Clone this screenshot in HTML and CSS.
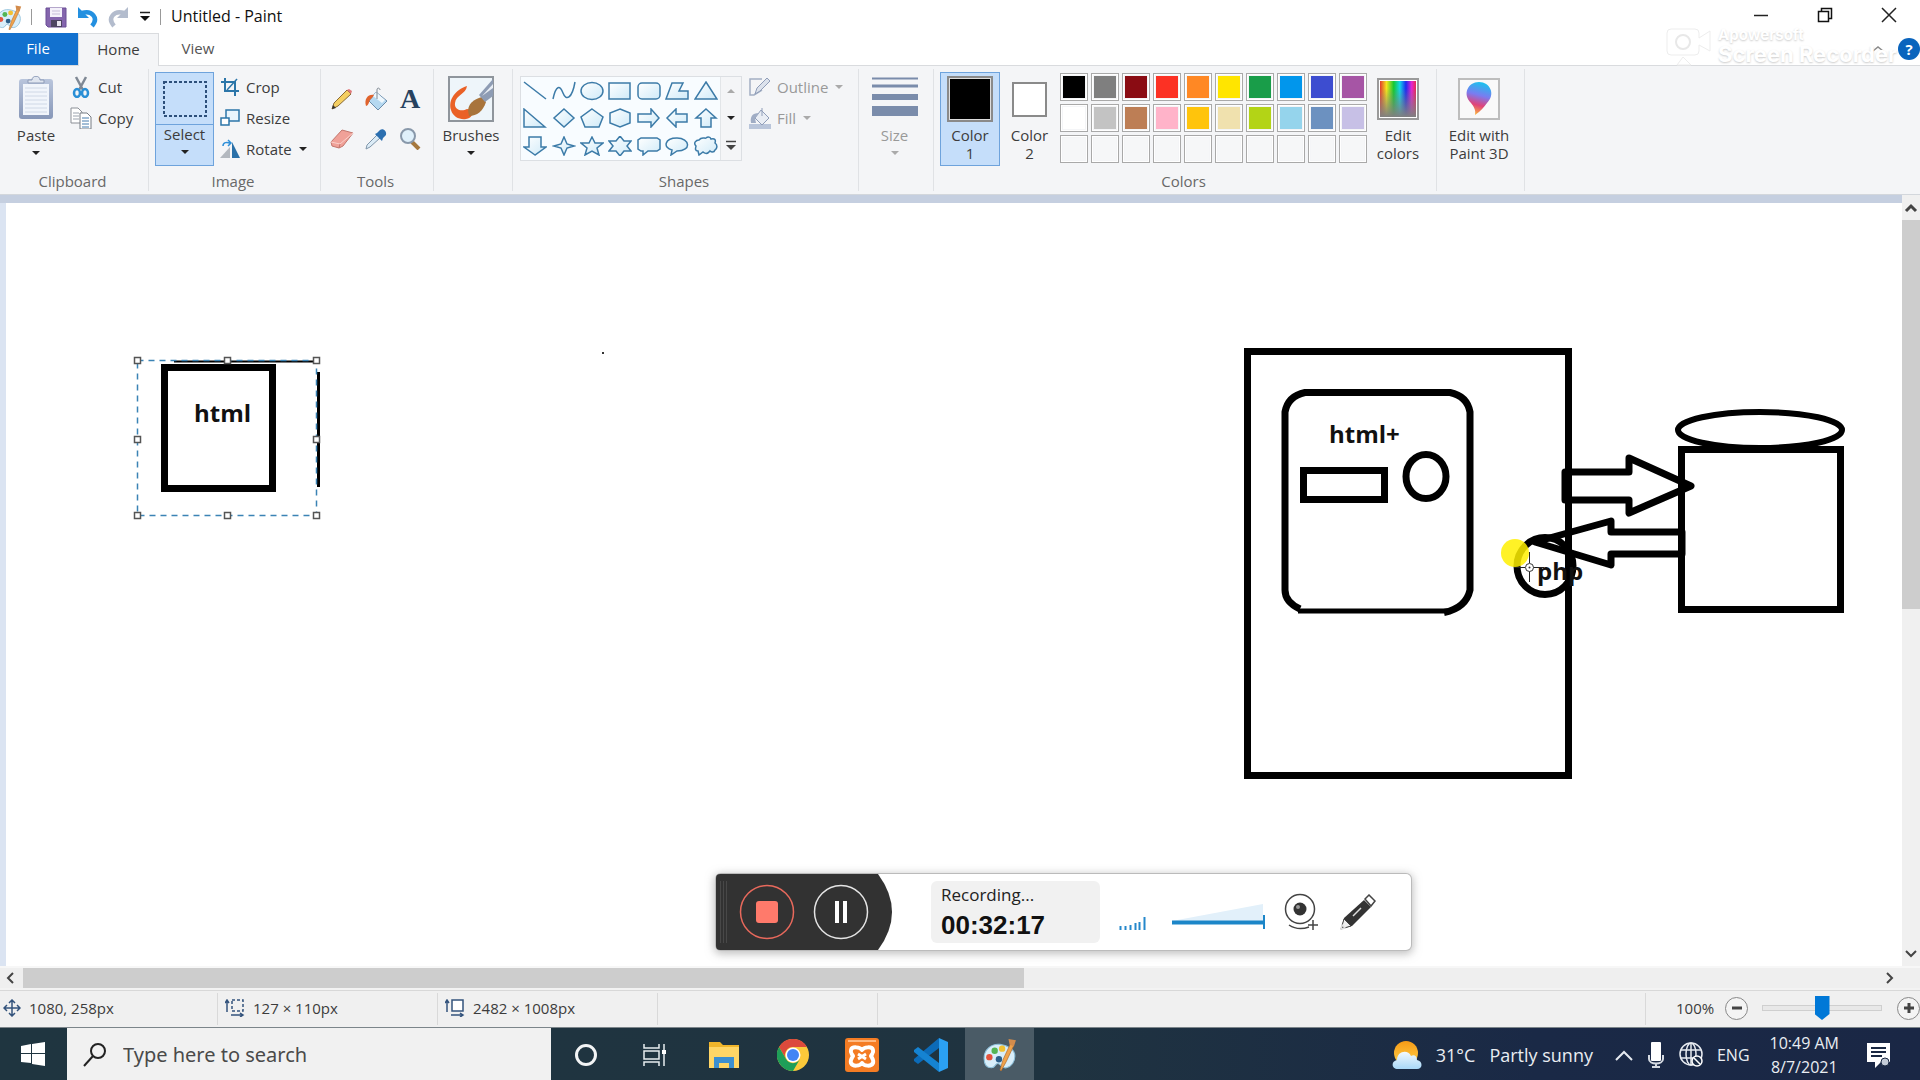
FILE: index.html
```html
<!DOCTYPE html>
<html lang="en">
<head>
<meta charset="utf-8">
<title>Untitled - Paint</title>
<link rel="stylesheet" href="styles.css">
</head>
<body>
<svg class="defs" aria-hidden="true">
  <defs>
    <linearGradient id="blueFill" x1="0" y1="0" x2="1" y2="1"><stop offset="0" stop-color="#fff"/><stop offset="1" stop-color="#cfeaf8"/></linearGradient>
    <linearGradient id="board" x1="0" y1="0" x2="0" y2="1"><stop offset="0" stop-color="#b9c5dc"/><stop offset="1" stop-color="#8797b8"/></linearGradient>
    <linearGradient id="rainbow"><stop offset="0" stop-color="#e33a2e"/><stop offset=".18" stop-color="#f4e51c"/><stop offset=".38" stop-color="#14c832"/><stop offset=".55" stop-color="#12d5e8"/><stop offset=".72" stop-color="#1c2af0"/><stop offset=".88" stop-color="#e424d0"/><stop offset="1" stop-color="#e52a50"/></linearGradient>
    <linearGradient id="fade" x1="0" y1="0" x2="0" y2="1"><stop offset=".2" stop-color="#808080" stop-opacity="0"/><stop offset="1" stop-color="#808080"/></linearGradient>
    <linearGradient id="pin" x1=".6" y1="0" x2=".4" y2="1"><stop offset="0" stop-color="#18c4ee"/><stop offset=".4" stop-color="#7a7cf0"/><stop offset=".7" stop-color="#e0427a"/><stop offset="1" stop-color="#fbb63a"/></linearGradient>
    <linearGradient id="sun" x1="0" y1="0" x2="0" y2="1"><stop offset="0" stop-color="#f59a16"/><stop offset="1" stop-color="#ffd24a"/></linearGradient>
    <linearGradient id="cloud" x1="0" y1="0" x2="0" y2="1"><stop offset="0" stop-color="#f2f9ff"/><stop offset="1" stop-color="#a8d8f8"/></linearGradient>
    <symbol id="palette" viewBox="0 0 32 32">
      <path d="M16 6C8 5 1 11 1 19c0 6 3 9 7 9 4 0 3-4 6-4 3 0 3 5 8 4 5-1 8-6 8-11C30 11 24 7 16 6z" fill="#d8eefa" stroke="#8dbfd9" stroke-width="1"/>
      <circle cx="6" cy="18" r="3" fill="#e5533d"/><circle cx="11" cy="12" r="3" fill="#54b454"/><circle cx="18" cy="10" r="3" fill="#f1c233"/><circle cx="15" cy="20" r="3" fill="#2c5f8a"/>
      <path d="M16 30l3-10 7-15 3 2-7 15-5 9z" fill="#f0a34c" stroke="#a9672b" stroke-width=".6"/><path d="M24 1l7 1-2 6-4-2z" fill="#d38c4c"/>
    </symbol>
  </defs>
</svg>

<div class="app">
  <header class="titlebar">
    <svg class="app-icon" viewBox="5 0 27 30"><use href="#palette" width="32" height="32"/></svg>
    <span class="divider"></span>
    <button class="plain save" aria-label="Save"><svg width="22" height="22" viewBox="0 0 22 22"><path d="M1 2h20v19H3l-2-2z" fill="#8465ad" stroke="#6b4e96"/><path d="M5 2h12v9H5z" fill="#f4f1fa"/><path d="M7 5h8M7 8h8" stroke="#c7bdd9"/><path d="M6 14h11v7H6z" fill="#4d4461"/><path d="M12 15h4v5h-4z" fill="#e8e4f0"/></svg></button>
    <button class="plain undo" aria-label="Undo"><svg width="22" height="22" viewBox="0 0 22 22"><path d="M5 7c10-3 17 5 10 13" fill="none" stroke="#2490e0" stroke-width="4.500"/><path d="M1 1v11l11 0z" fill="#2490e0"/></svg></button>
    <button class="plain redo" aria-label="Redo"><svg width="22" height="22" viewBox="0 0 22 22"><path d="M17 7C7 4 0 12 7 20" fill="none" stroke="#b3bccd" stroke-width="4.500"/><path d="M21 1v11H10z" fill="#b3bccd"/></svg></button>
    <button class="plain more" aria-label="Customize Quick Access Toolbar"><svg width="12" height="12" viewBox="0 0 12 12"><path d="M1 1.500h10" stroke="#222" stroke-width="1.500"/><path d="M1 5h10l-5 5z" fill="#111"/></svg></button>
    <span class="divider"></span>
    <h1 class="title">Untitled - Paint</h1>
    <div class="window-buttons">
      <button class="plain" aria-label="Minimize"><svg width="16" height="16"><path d="M1 8.500h14" stroke="#222" stroke-width="1.500"/></svg></button>
      <button class="plain" aria-label="Restore"><svg width="16" height="16"><path d="M1.500 4.500h10v10h-10zM4.500 4V1.500h10v10H12" fill="none" stroke="#111" stroke-width="1.500"/></svg></button>
      <button class="plain" aria-label="Close"><svg width="16" height="16"><path d="M1 1l14 14M15 1L1 15" stroke="#222" stroke-width="1.500"/></svg></button>
    </div>
  </header>

  <nav class="tabs">
    <button class="tab file">File</button>
    <button class="tab home">Home</button>
    <button class="tab view">View</button>
    <div class="tab-end">
      <button class="plain" aria-label="Collapse ribbon"><svg width="12" height="8"><path d="M1 6l5-4 5 4" fill="none" stroke="#8a8a8a" stroke-width="1.500"/></svg></button>
      <button class="help" aria-label="Help">?</button>
    </div>
  </nav>

  <section class="ribbon">
    <div class="group clipboard">
      <div class="body">
        <button class="big paste"><svg width="36" height="44" viewBox="0 0 36 44"><rect x="1" y="3" width="34" height="40" rx="3" fill="url(#board)"/><path d="M5 8h26v31H5z" fill="#f1f5fb"/><path d="M7 12h22M7 16h22M7 20h22M7 24h22M7 28h22M7 32h22M7 36h22" stroke="#cfd8e6"/><path d="M10 7V4h4c0-5 8-5 8 0h4v3z" fill="#dfe5ef" stroke="#8d9bb7"/></svg><span>Paste</span><i class="caret"></i></button>
        <div class="stack">
          <button class="row"><svg width="22" height="22" viewBox="0 0 22 22"><path d="M6 1l7 13M16 1L9 14" stroke="#7f8894" stroke-width="2.500"/><ellipse cx="7" cy="17" rx="3" ry="4" fill="none" stroke="#2a8fd6" stroke-width="2.500"/><ellipse cx="15" cy="17" rx="3" ry="4" fill="none" stroke="#2a8fd6" stroke-width="2.500"/></svg><span>Cut</span></button>
          <button class="row"><svg width="22" height="22" viewBox="0 0 22 22"><path d="M1 1h7l4 4v11H1z" fill="#fff" stroke="#8b8f96"/><path d="M3 6h6M3 9h6M3 12h6" stroke="#9aa2ad"/><path d="M10 6h7l4 4v12H10z" fill="#fff" stroke="#777c84"/><path d="M12 11h7M12 14h7M12 17h7M12 20h7" stroke="#477cae"/></svg><span>Copy</span></button>
        </div>
      </div>
      <div class="label">Clipboard</div>
    </div>

    <div class="group image">
      <div class="body">
        <button class="big select"><span class="top"><svg width="44" height="36"><rect x="1" y="1" width="42" height="34" fill="none" stroke="#2d4f7a" stroke-width="2" stroke-dasharray="3 2"/></svg></span><span>Select</span><i class="caret"></i></button>
        <div class="stack">
          <button class="row"><svg width="20" height="20" viewBox="0 0 20 20"><path d="M5 1v13h14M1 5h14v14" fill="none" stroke="#2c76a9" stroke-width="2"/><path d="M7 13L17 2" stroke="#2c76a9" stroke-width="1.500"/></svg><span>Crop</span></button>
          <button class="row"><svg width="20" height="20" viewBox="0 0 20 20"><path d="M6 2h13v11H6z" fill="#e9f5fd" stroke="#2c76a9" stroke-width="1.500"/><path d="M1 10h8v7H1z" fill="#fff" stroke="#2c76a9" stroke-width="1.500"/></svg><span>Resize</span></button>
          <button class="row"><svg width="20" height="20" viewBox="0 0 20 20"><path d="M10 8v11H0z" fill="#b3b8bf"/><path d="M12 3v16h8z" fill="#2a70a8"/><path d="M3 7c0-4 4-4 7-3M8 1l3 3-3 3" fill="none" stroke="#2f8fd8" stroke-width="1.500"/></svg><span>Rotate</span><i class="caret"></i></button>
        </div>
      </div>
      <div class="label">Image</div>
    </div>

    <div class="group tools">
      <div class="body">
        <button class="plain" aria-label="Pencil"><svg width="22" height="22" viewBox="0 0 22 22"><path d="M1 21l2-6L16 2l4 4L7 18z" fill="#f5cf62" stroke="#8a6a35"/><path d="M16 2l4 4 1-3-3-2z" fill="#e0797b"/><path d="M1 21l1-4 3 3z" fill="#333"/></svg></button>
        <button class="plain" aria-label="Fill with color"><svg width="24" height="24" viewBox="0 0 24 24"><path d="M12 5l11 9-9 9L5 14z" fill="#b5d8f0" stroke="#6b8caa"/><path d="M12 5l-3 4 9 7 3-3z" fill="#eef7fd"/><path d="M13 12V3c0-3 3-2 3 0" fill="none" stroke="#7c8791"/><path d="M10 8C4 7 0 12 2 19c4-1 2-6 6-8z" fill="#e0632d"/></svg></button>
        <button class="plain letter" aria-label="Text">A</button>
        <button class="plain" aria-label="Eraser"><svg width="24" height="20" viewBox="0 0 24 20"><path d="M1 13L12 1l11 3-10 13-4 2-7-2z" fill="#f0a198" stroke="#c2766d"/><path d="M1 13l9 2 13-11" fill="none" stroke="#fad0ca"/><path d="M10 15l-1 4" stroke="#c2766d"/></svg></button>
        <button class="plain" aria-label="Color picker"><svg width="22" height="22" viewBox="0 0 22 22"><path d="M1 21l1-4L12 7l3 3L5 19z" fill="#dcecf7" stroke="#8096aa"/><path d="M10 6l7 7 1-3 3-3c1-4-3-7-6-5l-3 3z" fill="#2b6fb0"/></svg></button>
        <button class="plain" aria-label="Magnifier"><svg width="22" height="22" viewBox="0 0 22 22"><path d="M13 14l7 7" stroke="#a5783e" stroke-width="4"/><circle cx="9" cy="8" r="7" fill="#dff0fb" stroke="#8898aa" stroke-width="2"/></svg></button>
      </div>
      <div class="label">Tools</div>
    </div>

    <div class="group brush">
      <div class="body"><button class="big"><svg width="46" height="46" viewBox="0 0 46 46"><rect x="1" y="1" width="44" height="44" fill="#eef5fa" stroke="#8f959c" stroke-width="2"/><path d="M19 10C7 14 0 24 3 34c2 7 9 10 15 9 6-1 7-5 6-9l-5-1c-5 3-13 1-12-6 1-8 11-9 12-17z" fill="#ea6127"/><path d="M20 34c1-9 10-12 14-13l4 5c-3 9-9 14-17 14z" fill="#a8743c"/><path d="M31 19L45 3v17L37 26z" fill="#8e9cb4"/><path d="M34 20L45 8v4z" fill="#e9eef5"/></svg><span>Brushes</span><i class="caret"></i></button></div>
      <div class="label"></div>
    </div>

    <div class="group shapes">
      <div class="body">
        <div class="gallery">
          <div class="shape-grid">
            <button aria-label="Line"><svg viewBox="0 0 24 20"><path d="M1 1l22 17"/></svg></button>
            <button aria-label="Curve"><svg viewBox="0 0 24 20"><path class="open" d="M1 18C4 4 8 4 11 12s9 6 12-11"/></svg></button>
            <button aria-label="Oval"><svg viewBox="0 0 24 20"><ellipse cx="12" cy="10" rx="11" ry="8.500"/></svg></button>
            <button aria-label="Rectangle"><svg viewBox="0 0 24 20"><path d="M1 2h21v16H1z"/></svg></button>
            <button aria-label="Rounded rectangle"><svg viewBox="0 0 24 20"><rect x="1" y="2" width="22" height="16" rx="4"/></svg></button>
            <button aria-label="Polygon"><svg viewBox="0 0 24 20"><path d="M1 18L7 2h11l-4 8h9v8z"/></svg></button>
            <button aria-label="Triangle"><svg viewBox="0 0 24 20"><path d="M12 1l11 17H1z"/></svg></button>
            <button aria-label="Right triangle"><svg viewBox="0 0 24 20"><path d="M1 1l21 18H1z"/></svg></button>
            <button aria-label="Diamond"><svg viewBox="0 0 24 20"><path d="M12 1l10 9-10 9-10-9z"/></svg></button>
            <button aria-label="Pentagon"><svg viewBox="0 0 24 20"><path d="M12 1l11 8-4 10H5L1 9z"/></svg></button>
            <button aria-label="Hexagon"><svg viewBox="0 0 24 20"><path d="M12 1l10 4v10l-10 4-10-4V5z"/></svg></button>
            <button aria-label="Right arrow"><svg viewBox="0 0 24 20"><path d="M1 6h13V1l8 9-8 9v-5H1z"/></svg></button>
            <button aria-label="Left arrow"><svg viewBox="0 0 24 20"><path d="M22 6H11V1l-9 9 9 9v-5h11z"/></svg></button>
            <button aria-label="Up arrow"><svg viewBox="0 0 24 20"><path d="M12 1l10 9h-5v9H7v-9H2z"/></svg></button>
            <button aria-label="Down arrow"><svg viewBox="0 0 24 20"><path d="M12 19L1 11h5V1h12v10h5z"/></svg></button>
            <button aria-label="Four-point star"><svg viewBox="0 0 24 20"><path d="M12 1l3 7 7 2-7 2-3 7-3-7-7-2 7-2z"/></svg></button>
            <button aria-label="Five-point star"><svg viewBox="0 0 24 20"><path d="M12 1l3 6h8l-6 5 2 7-7-4-7 4 2-7-6-5h8z"/></svg></button>
            <button aria-label="Six-point star"><svg viewBox="0 0 24 20"><path d="M12 0l4 5h7l-4 5 4 5h-7l-4 5-4-5H1l4-5-4-5h7z"/></svg></button>
            <button aria-label="Rounded callout"><svg viewBox="0 0 24 20"><path d="M4 2h16l3 2v9l-3 2h-9l-5 4v-4H4l-3-2V4z"/></svg></button>
            <button aria-label="Oval callout"><svg viewBox="0 0 24 20"><path d="M7 14C-2 12-1 2 12 2s15 13 0 13l-6 4z"/></svg></button>
            <button aria-label="Cloud callout"><svg viewBox="0 0 24 20"><path d="M5 4c3-4 6-1 7-2s4-2 5 1c4-1 5 1 4 4 3 2 2 6 0 7-1 3-4 2-5 1-3 4-6 2-7 1l-4 3-1-4c-4 0-2-4-2-5-3-3 0-6 3-6z"/></svg></button>
          </div>
          <div class="gallery-scroll">
            <button class="plain" aria-label="Scroll up"><i class="caret up pale"></i></button>
            <button class="plain" aria-label="Scroll down"><i class="caret"></i></button>
            <button class="plain" aria-label="More shapes"><svg width="12" height="12" viewBox="0 0 12 12"><path d="M1 1.500h10" stroke="#444" stroke-width="1.500"/><path d="M1 5h10l-5 5z" fill="#444"/></svg></button>
          </div>
        </div>
        <div class="stack dim">
          <button class="row"><svg width="22" height="20" viewBox="0 0 22 20"><path d="M13 2H1v16h4l8-5" fill="none" stroke="#a3afc4" stroke-width="1.500"/><path d="M6 17l2-6L18 1l3 3-10 10z" fill="#dce2ec" stroke="#8f9db8"/></svg><span>Outline</span><i class="caret pale"></i></button>
          <button class="row"><svg width="22" height="22" viewBox="0 0 22 22"><path d="M0 17h22v5H0z" fill="#b9c5da"/><path d="M12 3l8 8-7 7-7-7z" fill="#e9edf4" stroke="#8f9db8"/><path d="M10 6C3 6 1 10 2 16h5l-1-5z" fill="#a0adc5"/><path d="M13 9V1" stroke="#8f9db8"/></svg><span>Fill</span><i class="caret pale"></i></button>
        </div>
      </div>
      <div class="label">Shapes</div>
    </div>

    <div class="group size">
      <div class="body"><button class="big dim"><svg width="46" height="46" viewBox="0 0 46 46"><path d="M0 2.500h46" stroke="#7a8cab" stroke-width="2"/><path d="M0 10h46" stroke="#7a8cab" stroke-width="3"/><path d="M0 21h46" stroke="#7a8cab" stroke-width="6"/><path d="M0 35h46" stroke="#7a8cab" stroke-width="10"/></svg><span>Size</span><i class="caret pale"></i></button></div>
      <div class="label"></div>
    </div>

    <div class="group colors">
      <div class="body">
        <button class="big color-one"><span class="chip black"></span><span>Color<br>1</span></button>
        <button class="big color-two"><span class="chip-box"><span class="chip white"></span></span><span>Color<br>2</span></button>
        <div class="swatches">
          <button class="c01" aria-label="Black"></button><button class="c02" aria-label="Gray"></button><button class="c03" aria-label="Dark red"></button><button class="c04" aria-label="Red"></button><button class="c05" aria-label="Orange"></button><button class="c06" aria-label="Yellow"></button><button class="c07" aria-label="Green"></button><button class="c08" aria-label="Turquoise"></button><button class="c09" aria-label="Indigo"></button><button class="c10" aria-label="Purple"></button>
          <button class="c11" aria-label="White"></button><button class="c12" aria-label="Light gray"></button><button class="c13" aria-label="Brown"></button><button class="c14" aria-label="Rose"></button><button class="c15" aria-label="Gold"></button><button class="c16" aria-label="Light yellow"></button><button class="c17" aria-label="Lime"></button><button class="c18" aria-label="Light turquoise"></button><button class="c19" aria-label="Blue-gray"></button><button class="c20" aria-label="Lavender"></button>
          <button aria-label="Custom 1"></button><button aria-label="Custom 2"></button><button aria-label="Custom 3"></button><button aria-label="Custom 4"></button><button aria-label="Custom 5"></button><button aria-label="Custom 6"></button><button aria-label="Custom 7"></button><button aria-label="Custom 8"></button><button aria-label="Custom 9"></button><button aria-label="Custom 10"></button>
        </div>
        <button class="big edit-colors"><svg width="42" height="46" viewBox="0 0 42 46"><rect x="1" y="3" width="40" height="40" fill="#fff" stroke="#9a9a9a" stroke-width="2"/><path d="M3 5h36v36H3z" fill="url(#rainbow)"/><path d="M3 5h36v36H3z" fill="url(#fade)"/></svg><span>Edit<br>colors</span></button>
      </div>
      <div class="label">Colors</div>
    </div>

    <div class="group paint3d">
      <div class="body"><button class="big"><svg width="42" height="46" viewBox="0 0 42 46"><rect x="1" y="3" width="40" height="40" fill="#f9f9f9" stroke="#bdbdbd" stroke-width="2"/><path d="M17 39c1-5-1-8-4-12C4 18 10 6 21 6s17 12 8 21c-3 4-6 8-12 12z" fill="url(#pin)"/></svg><span>Edit with<br>Paint 3D</span></button></div>
      <div class="label"></div>
    </div>
  </section>

  <main class="workspace">
    <div class="canvas">
      <svg class="drawing" role="img" aria-label="Drawing canvas">
        <g transform="translate(-6 -203)" fill="none" stroke="#000" stroke-width="7">
          <path d="M174 361.500H316" stroke-width="2"/>
          <path d="M318.500 372V487" stroke-width="3"/>
          <rect x="164.500" y="367.500" width="108" height="121"/>
          <rect x="602" y="352" width="2" height="2" fill="#333" stroke="none"/>
          <rect x="1247.500" y="351.500" width="321" height="424"/>
          <path d="M1300 609Q1285 602 1285 590V412Q1288 396 1305 392.500H1450Q1467 396 1470 412V590Q1466 608 1444 612.500"/>
          <path d="M1298 611H1450" stroke-width="5"/>
          <rect x="1303.500" y="470.500" width="81" height="29"/>
          <ellipse cx="1426" cy="476.500" rx="20" ry="22"/>
          <ellipse cx="1545" cy="566" rx="28" ry="28.500"/>
          <g stroke-linejoin="round">
            <path d="M1565 472h64v-14l62 28-62 27v-13h-64z"/>
            <path d="M1682 532h-71v-11l-76 21 76 23v-11h71z"/>
          </g>
          <rect x="1681.500" y="449.500" width="159" height="160"/>
          <ellipse cx="1760" cy="430" rx="82" ry="18" stroke-width="6"/>
          <g class="canvas-text" stroke="none">
            <text x="194" y="422">html</text>
            <text x="1329" y="443">html+</text>
            <text x="1537" y="580">php</text>
          </g>
          <circle cx="1515" cy="553" r="14" fill="#fff000" fill-opacity=".85" stroke="none"/>
          <path d="M1514 567.500h11m8 0h11M1529.500 552v11m0 8v11" stroke="#222" stroke-width="1"/>
          <circle cx="1529.500" cy="567.500" r="4" fill="#fff" stroke="#333" stroke-width="1"/>
          <circle cx="1529.500" cy="567.500" r="1" fill="#333" stroke="none"/>
          <rect x="137.500" y="360.500" width="179" height="155" stroke="#3b83b5" stroke-width="1.500" stroke-dasharray="6 5"/>
          <g fill="#fff" stroke="#555" stroke-width="1.500">
            <rect x="134.500" y="357.500" width="6" height="6"/><rect x="224.500" y="357.500" width="6" height="6"/><rect x="313.500" y="357.500" width="6" height="6"/>
            <rect x="134.500" y="436.500" width="6" height="6"/><rect x="313.500" y="436.500" width="6" height="6"/>
            <rect x="134.500" y="512.500" width="6" height="6"/><rect x="224.500" y="512.500" width="6" height="6"/><rect x="313.500" y="512.500" width="6" height="6"/>
          </g>
        </g>
      </svg>
    </div>
    <div class="vscroll">
      <button class="plain" aria-label="Scroll up"><svg width="14" height="10"><path d="M2 8l5-5 5 5" fill="none" stroke="#444" stroke-width="3"/></svg></button>
      <div class="vtrack"><div class="vthumb"></div></div>
      <button class="plain" aria-label="Scroll down"><svg width="14" height="10"><path d="M2 2l5 5 5-5" fill="none" stroke="#444" stroke-width="2"/></svg></button>
    </div>
  </main>
  <div class="hscroll">
    <button class="plain" aria-label="Scroll left"><svg width="10" height="14"><path d="M8 2L3 7l5 5" fill="none" stroke="#444" stroke-width="2"/></svg></button>
    <div class="htrack"><div class="hthumb"></div></div>
    <button class="plain" aria-label="Scroll right"><svg width="10" height="14"><path d="M2 2l5 5-5 5" fill="none" stroke="#444" stroke-width="2"/></svg></button>
  </div>

  <footer class="status">
    <div class="cell first"><svg width="18" height="18" viewBox="0 0 18 18"><path d="M9 1v16M1 9h16M6 4l3-3 3 3M6 14l3 3 3-3M4 6L1 9l3 3M14 6l3 3-3 3" fill="none" stroke="#33537c" stroke-width="1.500"/></svg><span>1080, 258px</span></div>
    <div class="cell"><svg width="20" height="18" viewBox="0 0 20 18"><path d="M7 1h11v11H7z" fill="none" stroke="#33537c" stroke-width="1.500" stroke-dasharray="3 2"/><path d="M2 13V2M0 4l2-3 2 3M6 16h11M15 14l3 2-3 2" fill="none" stroke="#33537c" stroke-width="1.500"/></svg><span>127 × 110px</span></div>
    <div class="cell"><svg width="20" height="18" viewBox="0 0 20 18"><path d="M7 1h11v11H7z" fill="#fff" stroke="#33537c" stroke-width="1.500"/><path d="M2 13V2M0 4l2-3 2 3M6 16h11M15 14l3 2-3 2" fill="none" stroke="#33537c" stroke-width="1.500"/></svg><span>2482 × 1008px</span></div>
    <div class="cell"></div>
    <div class="zoom">
      <label for="zoom">100%</label>
      <button class="round" aria-label="Zoom out"><svg width="12" height="12"><path d="M1 6h10" stroke="#444" stroke-width="3"/></svg></button>
      <input id="zoom" type="range" min="0" max="100" value="50">
      <button class="round" aria-label="Zoom in"><svg width="12" height="12"><path d="M1 6h10M6 1v10" stroke="#444" stroke-width="3"/></svg></button>
    </div>
  </footer>

  <div class="taskbar">
    <button class="start" aria-label="Start"><svg width="24" height="24" viewBox="0 0 24 24"><path d="M0 4l10-2v9H0zM11 2l13-2v11H11zM0 12h10v9L0 20zM11 12h13v12l-13-2z" fill="#fff"/></svg></button>
    <div class="search">
      <svg width="24" height="24" viewBox="0 0 24 24"><circle cx="15" cy="8" r="7" fill="none" stroke="#222" stroke-width="2"/><path d="M10 13L1 23" stroke="#222" stroke-width="2"/></svg>
      <input type="text" placeholder="Type here to search" aria-label="Type here to search">
    </div>
    <div class="apps">
      <button aria-label="Cortana"><svg width="24" height="24"><circle cx="12" cy="12" r="9.500" fill="none" stroke="#f2f4f5" stroke-width="3"/></svg></button>
      <button aria-label="Task View"><svg width="24" height="24" viewBox="0 0 24 24"><path d="M1 1v4h15V1M1 23v-4h15v4M1 8h15v8H1zM21 1v22" fill="none" stroke="#e8edf0" stroke-width="1.500"/><path d="M19 7h4v4h-4z" fill="#fff"/></svg></button>
      <button aria-label="File Explorer"><svg width="32" height="28" viewBox="0 0 32 28"><path d="M1 1h11l3 3h16v23H1z" fill="#f0b52b"/><path d="M1 6h30v21H1z" fill="#ffd666"/><path d="M6 27V16h20v11h-5v-5h-10v5z" fill="#3c8fd0"/></svg></button>
      <button aria-label="Chrome"><svg width="32" height="32" viewBox="0 0 32 32"><circle cx="16" cy="16" r="16" fill="#fbc93a"/><path d="M2.100 8A16 16 0 0 1 29.900 8H16a8 8 0 0 0-7 12z" fill="#dc4a3c"/><path d="M2.100 8A16 16 0 0 0 16 32l7-12a8 8 0 0 1-14 0z" fill="#1e9e58"/><circle cx="16" cy="16" r="7.500" fill="#fff"/><circle cx="16" cy="16" r="6" fill="#4285f4"/></svg></button>
      <button aria-label="XAMPP"><svg width="34" height="34" viewBox="0 0 34 34"><rect width="34" height="34" rx="3" fill="#f47c24"/><path d="M3 3h28" stroke="#ffb981" stroke-width="2"/><path d="M17 12c-2-3-10-4-11 0-1 3 1 4 2 6-1 2-3 4-2 7 2 4 9 3 11 0 2 3 9 4 11 0 1-3-1-5-2-7 1-2 3-3 2-6-1-4-9-3-11 0z" fill="none" stroke="#fff" stroke-width="4" stroke-linejoin="round"/><path d="M13 16l8 5M21 16l-8 5" stroke="#fff" stroke-width="3"/></svg></button>
      <button aria-label="Visual Studio Code"><svg width="34" height="34" viewBox="0 0 34 34"><path d="M25 0v10L4 26l-4-3v-2z" fill="#0c6bb8"/><path d="M0 12l4-3 21 16v9L0 14z" fill="#1583d2"/><path d="M25 0l9 4v26l-9 4z" fill="#2ba0f2"/></svg></button>
      <button class="active" aria-label="Paint"><svg width="34" height="34"><use href="#palette" width="34" height="34"/></svg></button>
    </div>
    <div class="tray">
      <button class="weather"><svg width="30" height="28" viewBox="0 0 30 28"><circle cx="14" cy="12" r="12" fill="url(#sun)"/><path d="M6 28c-7 0-7-8-1-9 0-9 11-11 14-4 3-2 6 0 6 4 6 1 6 9 0 9z" fill="url(#cloud)"/></svg><span>31°C</span><span>Partly sunny</span></button>
      <button aria-label="Show hidden icons"><svg width="18" height="12"><path d="M1 11l8-8 8 8" fill="none" stroke="#e6eaf0" stroke-width="2"/></svg></button>
      <button aria-label="Microphone"><svg width="18" height="26" viewBox="0 0 18 26"><rect x="4" y="0" width="10" height="19" rx="1" fill="#fff"/><path d="M2 13v4c0 6 14 6 14 0v-4M9 21v4M5 25h8" fill="none" stroke="#d5dae2" stroke-width="2"/></svg></button>
      <button aria-label="Network"><svg width="24" height="26" viewBox="0 0 24 26"><g fill="none" stroke="#e6eaf0" stroke-width="1.500"><circle cx="12" cy="12" r="11"/><ellipse cx="12" cy="12" rx="5" ry="11"/><path d="M12 1v22M2 8h20M2 16h20"/></g><circle cx="18" cy="19" r="5" fill="#1b2b45" stroke="#fff" stroke-width="1.500"/><path d="M15 16l6 6" stroke="#fff" stroke-width="1.500"/></svg></button>
      <button class="lang">ENG</button>
      <button class="clock">10:49 AM<br>8/7/2021</button>
      <button aria-label="Notifications"><svg width="24" height="26" viewBox="0 0 24 26"><path d="M0 1h23v19h-9l-6 6v-6H0z" fill="#fff"/><path d="M4 6h15M4 10h15M4 14h11" stroke="#1a2842" stroke-width="2"/><circle cx="18" cy="20" r="4" fill="#c3cad6" stroke="#1a2842"/></svg></button>
    </div>
  </div>
</div>

<div class="watermark" aria-hidden="true">
  <svg width="46" height="40" viewBox="0 0 46 40"><path d="M5 1h24q4 0 4 4v5l11-7v20l-11-6v6q0 4-4 4H5q-4 0-4-4V5q0-4 4-4zM17 29l8 8H11z" fill="#fff" stroke="#ededed"/><circle cx="17" cy="14" r="7" fill="none" stroke="#e8e8e8" stroke-width="2"/></svg>
  <div><div class="brand">Apowersoft</div><div class="product">Screen Recorder</div></div>
</div>

<section class="recorder" aria-label="Screen recorder">
  <div class="recorder-main">
    <svg class="recorder-shape" viewBox="0 0 176 76" preserveAspectRatio="none"><path d="M0 0h162q28 38 0 76H0z" fill="#323232"/><path d="M4.500 7v62M7.500 7v62M10.500 7v62" stroke="#484848"/></svg>
    <button aria-label="Stop"><svg width="56" height="56"><circle cx="28" cy="28" r="26.500" fill="none" stroke="#e8695c" stroke-width="1.500"/><rect x="17" y="17" width="22" height="22" rx="3" fill="#ff7a6b"/></svg></button>
    <button aria-label="Pause"><svg width="56" height="56"><circle cx="28" cy="28" r="26.500" fill="none" stroke="#e4e4e4" stroke-width="1.500"/><path d="M24 17v22M32 17v22" stroke="#fff" stroke-width="4"/></svg></button>
  </div>
  <div class="timer"><span>Recording...</span><strong>00:32:17</strong></div>
  <svg class="levels" width="28" height="16"><path d="M1.500 16v-4M6.500 16v-4M11.500 16v-5M16.500 16V9M20.500 16V8M25.500 16V3" stroke="#2588cb" stroke-width="2"/></svg>
  <svg class="volume" width="94" height="28"><path d="M0 18L91 1v18z" fill="#e2f0fa"/><path d="M0 19.500h91" stroke="#1c86c8" stroke-width="4"/><path d="M92 12v14" stroke="#1c86c8" stroke-width="2"/></svg>
  <button class="camera" aria-label="Webcam"><svg width="36" height="38" viewBox="0 0 36 38"><circle cx="16" cy="16" r="14.500" fill="none" stroke="#444" stroke-width="1.500"/><circle cx="16" cy="16" r="6.500" fill="#333"/><circle cx="14" cy="14" r="2" fill="#999"/><path d="M5 32q9 6 20 2M24 32h10M29 27v10" fill="none" stroke="#444" stroke-width="1.500"/></svg></button>
  <button class="annotate" aria-label="Annotate"><svg width="36" height="36" viewBox="0 0 36 36"><path d="M1 35l3-11L24 6l7 7-19 19z" fill="#333"/><path d="M25 5l4-4 6 6-4 5z" fill="#fff" stroke="#444" stroke-width="1.500"/><path d="M1 35l3-10 7 7z" fill="#eee" stroke="#444"/><path d="M1 35l1-4 3 3zM13 22l8-8" stroke="#ddd" stroke-width="1.500" fill="#333"/></svg></button>
</section>
</body>
</html>
```
FILE: styles.css
```css
* { box-sizing: border-box; }
body { margin: 0; font: 15px/18px "Open Sans", "Noto Sans", sans-serif; color: #3c3c3c; background: #fff; overflow: hidden; }
button { margin: 0; padding: 0; border: 0; background: none; font: inherit; color: inherit; display: flex; align-items: center; justify-content: center; flex: none; }
svg { display: block; flex: none; }
.defs { position: absolute; width: 0; height: 0; }
.app { display: flex; flex-direction: column; height: 100vh; }

.titlebar { display: flex; align-items: center; height: 33px; flex: none; }
.app-icon { width: 22px; height: 26px; }
.divider { width: 1px; height: 16px; background: #999; margin: 0 10px 0 9px; }
.save { margin: 0 10px 0 3px; }
.undo { margin-right: 8px; }
.redo { margin-right: 10px; }
.title { margin: 0; font-size: 16px; font-weight: 400; color: #111; padding-bottom: 2px; }
.window-buttons { display: flex; gap: 48px; margin-left: auto; padding: 0 23px 4px 0; }

.tabs { display: flex; height: 33px; flex: none; border-bottom: 1px solid #d9dbde; }
.tab { height: 32px; padding-bottom: 2px; }
.file { width: 78px; background: #1271cf; color: #fff; padding-right: 2px; }
.home { width: 81px; height: 33px; background: #f4f5f7; border: 1px solid #d9dbde; border-bottom: 0; }
.view { width: 78px; color: #555; }
.tab-end { display: flex; align-items: center; gap: 14px; margin-left: auto; }
.help { width: 22px; height: 22px; border-radius: 50%; background: #0a64bd; color: #fff; font-weight: 700; }

.ribbon { display: flex; height: 129px; flex: none; background: #f4f5f7; border-bottom: 1px solid #d3d7dc; }
.group { display: flex; flex-direction: column; flex: none; border-right: 1px solid #e0e2e5; margin: 3px 0; }
.body { display: flex; height: 101px; padding-top: 3px; }
.label { height: 20px; padding-right: 3px; text-align: center; color: #686868; line-height: 22px; }
.big { flex-direction: column; justify-content: flex-start; height: 94px; padding-top: 4px; line-height: 18px; }
.big > svg { margin-bottom: 4px; }
.caret { width: 0; height: 0; border: 4px solid transparent; border-top-color: #222; border-bottom: 0; }
.big .caret { margin-top: 7px; }
.caret.pale { border-top-color: #aaa; }
.caret.up { border: 4px solid transparent; border-top: 0; border-bottom-color: #aaa; }
.dim { color: #999; }
.stack { display: flex; flex-direction: column; }
.row { height: 31px; gap: 6px; justify-content: flex-start; padding-bottom: 2px; }

.clipboard { width: 149px; }
.paste { width: 54px; margin-left: 9px; }
.paste > svg { margin-bottom: 6px; }
.clipboard .stack { margin-left: 7px; }
.image { width: 172px; }
.select { width: 59px; margin-left: 6px; background: #c5defa; border: 1px solid #6ea3dc; padding-top: 0; }
.select .top { display: flex; align-items: center; justify-content: center; width: 100%; height: 52px; border-bottom: 1px solid #6ea3dc; }
.image .stack { margin-left: 6px; }
.row > .caret { margin-left: 1px; }
.tools { width: 113px; }
.tools .body { display: grid; grid-template-columns: repeat(3, 34px); grid-template-rows: 40px 40px; padding: 10px 0 0 4px; }
.letter { font: 700 28px/28px "Liberation Serif", serif; color: #27425f; }
.brush { width: 79px; }
.brush .big { width: 74px; }
.shapes { width: 346px; }
.gallery { display: flex; width: 222px; height: 85px; margin: 4px 7px 0 7px; border: 1px solid #dcdfe3; background: #f8fcff; }
.shape-grid { display: grid; grid-template-columns: repeat(7, 1fr); flex: 1; }
.shape-grid button { min-width: 0; }
.shape-grid svg { width: 24px; height: 20px; fill: url(#blueFill); stroke: #3c7ba8; stroke-width: 1.500px; }
.shape-grid .open { fill: none; }
.gallery-scroll { display: grid; grid-template-rows: repeat(3, 1fr); width: 21px; border-left: 1px solid #e2e5e8; background: #f4f5f7; }
.gallery-scroll button { width: 100%; }
.size { width: 75px; }
.size .big { width: 71px; }
.colors { width: 503px; }
.color-one { width: 60px; margin-left: 6px; background: #c5defa; border: 1px solid #6ea3dc; padding-top: 3px; }
.chip { display: block; border: 2px solid #8a8a8a; }
.black { width: 46px; height: 46px; background: #000; outline: 1px solid #ddd; outline-offset: -3px; margin-bottom: 4px; }
.color-two { width: 59px; }
.chip-box { display: flex; align-items: center; height: 46px; margin-bottom: 4px; }
.white { width: 35px; height: 35px; background: #fff; }
.swatches { display: grid; grid-template-columns: repeat(10, 28px); grid-template-rows: repeat(3, 28px); gap: 3px; margin: 1px 4px 0 1px; }
.swatches button { border: 1px solid #a9a9a9; padding: 2px; background: #f6f7f8 content-box; box-shadow: inset 0 0 0 1px #fff; }
.swatches .c01 { background-color: #000; }
.swatches .c02 { background-color: #7f7f7f; }
.swatches .c03 { background-color: #8a0c13; }
.swatches .c04 { background-color: #fc3124; }
.swatches .c05 { background-color: #ff8824; }
.swatches .c06 { background-color: #ffe500; }
.swatches .c07 { background-color: #199d49; }
.swatches .c08 { background-color: #0196ec; }
.swatches .c09 { background-color: #3d4dd0; }
.swatches .c10 { background-color: #a655a5; }
.swatches .c11 { background-color: #fff; }
.swatches .c12 { background-color: #c3c3c3; }
.swatches .c13 { background-color: #bd7e55; }
.swatches .c14 { background-color: #ffb3c9; }
.swatches .c15 { background-color: #ffc40c; }
.swatches .c16 { background-color: #f0e1ae; }
.swatches .c17 { background-color: #b3d416; }
.swatches .c18 { background-color: #95d4ec; }
.swatches .c19 { background-color: #6c91c0; }
.swatches .c20 { background-color: #c7c0e6; }
.edit-colors { width: 54px; }
.paint3d { width: 88px; }
.paint3d .big { width: 84px; }

.workspace { display: flex; flex: 1; min-height: 0; background: #c5cfe0; }
.canvas { flex: 1; min-width: 0; margin: 8px 0 0; border-left: 6px solid #dbe4f2; background: #fff; overflow: hidden; }
.drawing { width: 100%; height: 100%; }
.canvas-text { font: 700 24px "Open Sans", sans-serif; fill: #111; }
.vscroll { display: flex; flex-direction: column; width: 18px; background: #f0f0f0; }
.vscroll button { height: 25px; }
.vtrack, .htrack { flex: 1; }
.vthumb { height: 54%; background: #cdcdcd; }
.hscroll { display: flex; height: 24px; flex: none; background: #efefef; border-top: 2px solid #f7f7f7; border-bottom: 2px solid #f3f3f3; }
.hscroll button { width: 23px; padding-right: 4px; }
.hscroll button:last-child { width: 44px; padding-right: 16px; }
.htrack { display: flex; }
.hthumb { width: 54%; background: #cdcdcd; }

.status { display: flex; height: 37px; flex: none; background: #f0f0f0; border-top: 1px solid #d8d8d8; }
.cell { display: flex; align-items: center; gap: 8px; width: 220px; padding: 0 0 2px 7px; margin: 2px 0; border-right: 1px solid #d9d9d9; }
.first { width: 218px; padding-left: 3px; }
.zoom { display: flex; align-items: center; margin: 2px 0 2px auto; border-left: 1px solid #d9d9d9; padding: 0 0 2px 30px; }
.zoom label { width: 49px; }
.round { width: 23px; height: 23px; border: 1px solid #888; border-radius: 50%; background: #f4f4f4; }
.zoom input { appearance: none; width: 120px; height: 24px; margin: 0 15px 0 14px; background: none; }
.zoom input::-webkit-slider-runnable-track { height: 6px; background: #e8e8e8; border: 1px solid #cfcfcf; }
.zoom input::-webkit-slider-thumb { appearance: none; width: 15px; height: 24px; margin-top: -10px; background: #0078d7; clip-path: polygon(0 0, 100% 0, 100% 75%, 50% 100%, 0 75%); }

.taskbar { display: flex; height: 53px; flex: none; background: linear-gradient(90deg, #1f3540 0%, #1f3340 55%, #1a2946 80%, #1a2745 100%); color: #e9edf2; border-top: 1px solid #7c858a; }
.start { width: 67px; padding-right: 2px; }
.search { display: flex; align-items: center; gap: 16px; width: 484px; background: #f1f1f1; padding: 2px 0 0 16px; }
.search input { flex: 1; min-width: 0; border: 0; background: none; padding: 0; outline: 0; font: 20px/28px "Noto Sans", sans-serif; }
.search input::placeholder { color: #4a4a4a; opacity: 1; }
.apps { display: flex; }
.apps button { width: 69px; padding-top: 2px; }
.apps .active { background: #4a5b66; }
.tray { display: flex; align-items: center; gap: 14px; margin-left: auto; padding: 2px 29px 0 0; }
.weather { font-size: 18px; gap: 14px; margin-right: 8px; }
.tray .lang { font-size: 16px; }
.tray .clock { font-size: 16px; line-height: 24px; display: block; text-align: center; margin: 0 14px 0 6px; }

.watermark { position: absolute; top: 28px; right: 23px; display: flex; gap: 6px; color: #fff; font-family: "Inter", sans-serif; font-weight: 700; text-shadow: 0 1px 2px #ccc; }
.brand { font-size: 15px; line-height: 14px; }
.product { font-size: 22px; line-height: 24px; }

.recorder { position: absolute; left: 716px; bottom: 130px; display: flex; align-items: center; width: 695px; height: 76px; background: #fff; border-radius: 5px; box-shadow: 0 0 0 1px #bbb, 0 2px 8px 2px #8888; }
.recorder-main { position: relative; display: flex; align-items: center; gap: 18px; width: 176px; height: 76px; padding-left: 23px; }
.recorder-main button { position: relative; }
.recorder-shape { position: absolute; inset: 0; width: 100%; height: 100%; border-radius: 4px 0 0 4px; }
.timer { display: flex; flex-direction: column; width: 169px; height: 62px; margin: 0 19px 0 39px; padding: 3px 10px; border-radius: 6px; background: #f1f1f1; color: #222; font-size: 17px; line-height: 22px; }
.timer strong { font: 700 26px/38px "Liberation Sans", sans-serif; color: #111; }
.levels { margin: 20px 25px 0 0; }
.volume { margin: 10px 18px 0 0; }
.camera { margin-right: 20px; }
```
